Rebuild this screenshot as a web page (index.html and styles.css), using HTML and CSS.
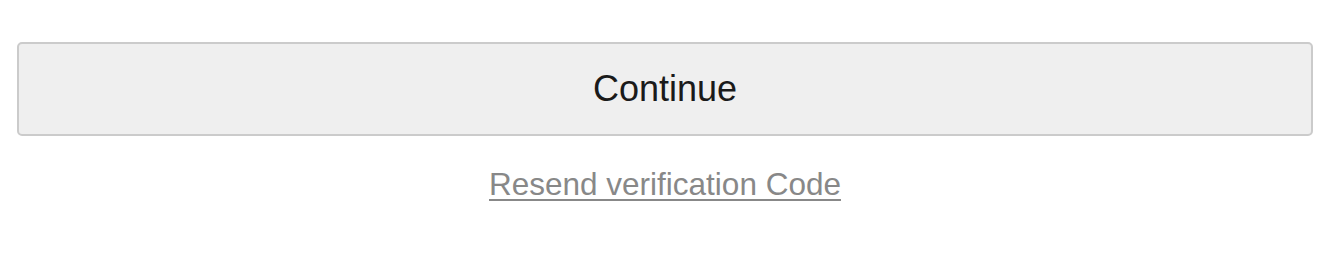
FILE: index.html
```html
<!DOCTYPE html>
<html>
<head>
<meta charset="utf-8">
<link rel="stylesheet" href="styles.css">
</head>
<body>
<div class="wrap">
  <button class="btn" type="button">Continue</button>
  <div class="links"><a class="resend" href="#">Resend verification Code</a></div>
</div>
</body>
</html>
```
FILE: styles.css
```css
html, body {
  margin: 0;
  padding: 0;
  background: #ffffff;
}
.wrap {
  padding: 42px 31px 0 17px;
  font-family: "Liberation Sans", Arial, sans-serif;
}
.btn {
  display: block;
  width: 100%;
  height: 94px;
  box-sizing: border-box;
  background: #efefef;
  border: 2px solid #cbcbcb;
  border-radius: 5px;
  font-family: "Liberation Sans", Arial, sans-serif;
  font-size: 36px;
  color: #1a1a1a;
  padding: 0;
  margin: 0;
}
.links {
  text-align: center;
  margin-top: 30px;
}
.resend {
  font-size: 31.5px;
  color: #888888;
  text-decoration: underline;
  text-decoration-thickness: 2px;
  text-underline-offset: 4px;
}
```
